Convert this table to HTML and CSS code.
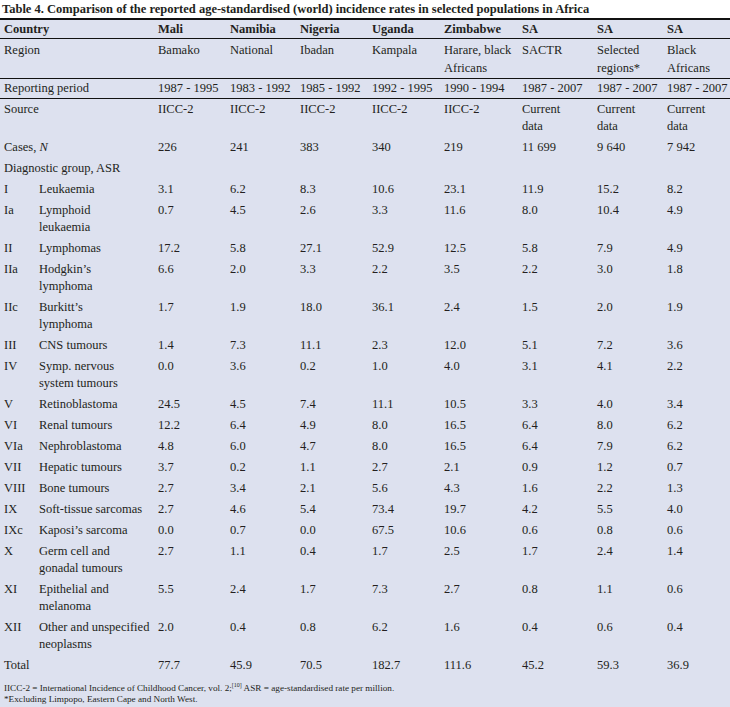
FILE: index.html
```html
<!DOCTYPE html>
<html lang="en">
<head>
<meta charset="utf-8">
<title>Table 4</title>
<link rel="stylesheet" href="styles.css">
</head>
<body>
<div class="page">
  <h1 class="title">Table 4. Comparison of the reported age-standardised (world) incidence rates in selected populations in Africa</h1>
  <table class="data">
    <colgroup>
      <col class="w-num"><col class="w-lab"><col class="w-mali"><col class="w-nam"><col class="w-nig"><col class="w-uga"><col class="w-zim"><col class="w-sa1"><col class="w-sa2"><col class="w-sa3">
    </colgroup>
    <thead>
      <tr class="head ruled">
        <th colspan="2" class="first">Country</th><th>Mali</th><th>Namibia</th><th>Nigeria</th><th>Uganda</th><th>Zimbabwe</th><th>SA</th><th>SA</th><th>SA</th>
      </tr>
      <tr class="region ruled">
        <td colspan="2" class="first">Region</td><td>Bamako</td><td>National</td><td>Ibadan</td><td>Kampala</td><td>Harare, black<br>Africans</td><td>SACTR</td><td>Selected<br>regions*</td><td>Black<br>Africans</td>
      </tr>
      <tr class="period ruled">
        <td colspan="2" class="first">Reporting period</td><td>1987 - 1995</td><td>1983 - 1992</td><td>1985 - 1992</td><td>1992 - 1995</td><td>1990 - 1994</td><td>1987 - 2007</td><td>1987 - 2007</td><td>1987 - 2007</td>
      </tr>
    </thead>
    <tbody>
      <tr><td colspan="2" class="first">Source</td><td>IICC-2</td><td>IICC-2</td><td>IICC-2</td><td>IICC-2</td><td>IICC-2</td><td>Current<br>data</td><td>Current<br>data</td><td>Current<br>data</td></tr>
      <tr><td colspan="2" class="first">Cases, <i>N</i></td><td>226</td><td>241</td><td>383</td><td>340</td><td>219</td><td>11 699</td><td>9 640</td><td>7 942</td></tr>
      <tr><td colspan="2" class="first">Diagnostic group, ASR</td><td></td><td></td><td></td><td></td><td></td><td></td><td></td><td></td></tr>
      <tr><td class="first">I</td><td>Leukaemia</td><td>3.1</td><td>6.2</td><td>8.3</td><td>10.6</td><td>23.1</td><td>11.9</td><td>15.2</td><td>8.2</td></tr>
      <tr><td class="first">Ia</td><td>Lymphoid<br>leukaemia</td><td>0.7</td><td>4.5</td><td>2.6</td><td>3.3</td><td>11.6</td><td>8.0</td><td>10.4</td><td>4.9</td></tr>
      <tr><td class="first">II</td><td>Lymphomas</td><td>17.2</td><td>5.8</td><td>27.1</td><td>52.9</td><td>12.5</td><td>5.8</td><td>7.9</td><td>4.9</td></tr>
      <tr><td class="first">IIa</td><td>Hodgkin’s<br>lymphoma</td><td>6.6</td><td>2.0</td><td>3.3</td><td>2.2</td><td>3.5</td><td>2.2</td><td>3.0</td><td>1.8</td></tr>
      <tr><td class="first">IIc</td><td>Burkitt’s<br>lymphoma</td><td>1.7</td><td>1.9</td><td>18.0</td><td>36.1</td><td>2.4</td><td>1.5</td><td>2.0</td><td>1.9</td></tr>
      <tr><td class="first">III</td><td>CNS tumours</td><td>1.4</td><td>7.3</td><td>11.1</td><td>2.3</td><td>12.0</td><td>5.1</td><td>7.2</td><td>3.6</td></tr>
      <tr><td class="first">IV</td><td>Symp. nervous<br>system tumours</td><td>0.0</td><td>3.6</td><td>0.2</td><td>1.0</td><td>4.0</td><td>3.1</td><td>4.1</td><td>2.2</td></tr>
      <tr><td class="first">V</td><td>Retinoblastoma</td><td>24.5</td><td>4.5</td><td>7.4</td><td>11.1</td><td>10.5</td><td>3.3</td><td>4.0</td><td>3.4</td></tr>
      <tr><td class="first">VI</td><td>Renal tumours</td><td>12.2</td><td>6.4</td><td>4.9</td><td>8.0</td><td>16.5</td><td>6.4</td><td>8.0</td><td>6.2</td></tr>
      <tr><td class="first">VIa</td><td>Nephroblastoma</td><td>4.8</td><td>6.0</td><td>4.7</td><td>8.0</td><td>16.5</td><td>6.4</td><td>7.9</td><td>6.2</td></tr>
      <tr><td class="first">VII</td><td>Hepatic tumours</td><td>3.7</td><td>0.2</td><td>1.1</td><td>2.7</td><td>2.1</td><td>0.9</td><td>1.2</td><td>0.7</td></tr>
      <tr><td class="first">VIII</td><td>Bone tumours</td><td>2.7</td><td>3.4</td><td>2.1</td><td>5.6</td><td>4.3</td><td>1.6</td><td>2.2</td><td>1.3</td></tr>
      <tr><td class="first">IX</td><td>Soft-tissue sarcomas</td><td>2.7</td><td>4.6</td><td>5.4</td><td>73.4</td><td>19.7</td><td>4.2</td><td>5.5</td><td>4.0</td></tr>
      <tr><td class="first">IXc</td><td>Kaposi’s sarcoma</td><td>0.0</td><td>0.7</td><td>0.0</td><td>67.5</td><td>10.6</td><td>0.6</td><td>0.8</td><td>0.6</td></tr>
      <tr><td class="first">X</td><td>Germ cell and<br>gonadal tumours</td><td>2.7</td><td>1.1</td><td>0.4</td><td>1.7</td><td>2.5</td><td>1.7</td><td>2.4</td><td>1.4</td></tr>
      <tr><td class="first">XI</td><td>Epithelial and<br>melanoma</td><td>5.5</td><td>2.4</td><td>1.7</td><td>7.3</td><td>2.7</td><td>0.8</td><td>1.1</td><td>0.6</td></tr>
      <tr><td class="first">XII</td><td>Other and unspecified<br>neoplasms</td><td>2.0</td><td>0.4</td><td>0.8</td><td>6.2</td><td>1.6</td><td>0.4</td><td>0.6</td><td>0.4</td></tr>
      <tr><td colspan="2" class="first">Total</td><td>77.7</td><td>45.9</td><td>70.5</td><td>182.7</td><td>111.6</td><td>45.2</td><td>59.3</td><td>36.9</td></tr>
    </tbody>
  </table>
  <div class="notes">
    <p>IICC-2 = International Incidence of Childhood Cancer, vol. 2;<sup>[10]</sup> ASR = age-standardised rate per million.</p>
    <p>*Excluding Limpopo, Eastern Cape and North West.</p>
  </div>
</div>
</body>
</html>
```
FILE: styles.css
```css
html, body {
  margin: 0;
  padding: 0;
}
body {
  background: #dde1ef;
  color: #231f20;
  font-family: "Liberation Serif", "Times New Roman", serif;
  width: 730px;
  height: 707px;
  overflow: hidden;
}
.page {
  display: flex;
  flex-direction: column;
}
.title {
  margin: 0;
  background: #ffffff;
  font-size: 12.5px;
  font-weight: bold;
  line-height: 18px;
  padding-left: 2px;
  white-space: nowrap;
}
.data {
  border-collapse: collapse;
  table-layout: fixed;
  width: 730px;
  border-top: 2px solid #111;
  font-size: 12.5px;
}
.w-num { width: 39px; }
.w-lab { width: 119px; }
.w-mali { width: 72px; }
.w-nam { width: 70px; }
.w-nig { width: 72px; }
.w-uga { width: 72px; }
.w-zim { width: 78px; }
.w-sa1 { width: 75px; }
.w-sa2 { width: 70px; }
.w-sa3 { width: 63px; }
.data th, .data td {
  text-align: left;
  vertical-align: top;
  padding: 2px 0;
  line-height: 17px;
  white-space: nowrap;
  font-weight: normal;
}
.data .head th {
  font-weight: bold;
  padding-top: 1px;
  padding-bottom: 0;
}
.data .region td {
  padding-top: 2px;
  padding-bottom: 1px;
  line-height: 18px;
}
.data .period td {
  padding-top: 1px;
  padding-bottom: 1px;
}
.data tr > .first {
  padding-left: 4px;
}
.data tr.ruled {
  border-bottom: 1px solid #111;
}
.notes {
  font-size: 9.2px;
  line-height: 11px;
  padding: 7px 4px 0;
}
.notes p {
  margin: 0;
}
.notes sup {
  font-size: 6px;
  line-height: 0;
  vertical-align: 4px;
}
```
